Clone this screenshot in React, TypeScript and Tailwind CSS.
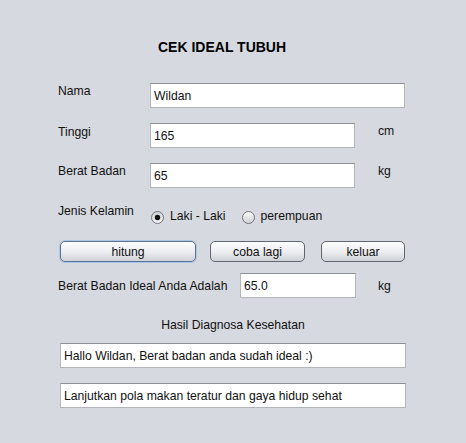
import React from "react";

function Field({ value, w }: { value: string; w: string }) {
  return (
    <div
      className={`h-[25px] ${w} shrink-0 bg-white border border-[#b2b5ba] border-t-[#8d8f93] pl-[3px] pt-[5px] leading-[15px] text-[#111]`}
    >
      {value}
    </div>
  );
}

function Radio({ checked }: { checked: boolean }) {
  return (
    <svg width="13" height="13" viewBox="0 0 13 13" className="shrink-0">
      <defs>
        <linearGradient id={checked ? "rg1" : "rg2"} x1="0" y1="0" x2="0" y2="1">
          <stop offset="0" stopColor={checked ? "#cfd2d6" : "#fbfbfc"} />
          <stop offset="1" stopColor={checked ? "#f3f4f6" : "#cdd0d5"} />
        </linearGradient>
      </defs>
      <circle cx="6.5" cy="6.5" r="6" fill={`url(#${checked ? "rg1" : "rg2"})`} stroke="#6f747c" strokeWidth="1" />
      {checked && <circle cx="6.5" cy="6.5" r="2.7" fill="#111" />}
    </svg>
  );
}

function Button({ label, w, focus }: { label: string; w: string; focus?: boolean }) {
  return (
    <div
      className={`h-[21px] ${w} shrink-0 rounded-[5px] border ${
        focus ? "border-[#5d7594] shadow-[0_0_0_1px_#a9c4e4]" : "border-[#62666e]"
      } bg-gradient-to-b from-[#fdfdfd] via-[#eceef1] to-[#cfd2d8] flex items-center justify-center pt-px leading-[15px] text-[#111]`}
    >
      {label}
    </div>
  );
}

export default function App() {
  return (
    <div
      className="w-[466px] h-[443px] bg-[#d6d9df] text-[12.2px] leading-[15px] text-[#111] overflow-hidden"
      style={{ fontFamily: '"Liberation Sans", Arial, sans-serif' }}
    >
      <div className="pt-[39px] pl-[158px] font-bold text-[14px] leading-[16px] text-black">CEK IDEAL TUBUH</div>

      <div className="pl-[58px]">
        <div className="mt-[28px] flex items-start">
          <div className="w-[92px] mt-[1px]">Nama</div>
          <Field value="Wildan" w="w-[255px]" />
        </div>

        <div className="mt-[15px] flex items-start">
          <div className="w-[92px] mt-[2px]">Tinggi</div>
          <Field value="165" w="w-[205px]" />
          <div className="ml-[23px] mt-[1px]">cm</div>
        </div>

        <div className="mt-[15px] flex items-start">
          <div className="w-[92px] mt-[1px]">Berat Badan</div>
          <Field value="65" w="w-[205px]" />
          <div className="ml-[23px] mt-[1px]">kg</div>
        </div>

        <div className="mt-[16px] flex items-start">
          <div className="w-[92px]">Jenis Kelamin</div>
          <div className="mt-[5px] ml-[1px] flex items-center">
            <div className="flex items-center gap-[6px] pt-px">
              <Radio checked />
              <span className="-mt-px">Laki - Laki</span>
            </div>
            <div className="ml-[16px] flex items-center gap-[6px] pt-px">
              <Radio checked={false} />
              <span className="-mt-px">perempuan</span>
            </div>
          </div>
        </div>

        <div className="mt-[17px] flex items-start">
          <div className="ml-[2px]">
            <Button label="hitung" w="w-[136px]" focus />
          </div>
          <div className="ml-[14px]">
            <Button label="coba lagi" w="w-[95px]" />
          </div>
          <div className="ml-[16px]">
            <Button label="keluar" w="w-[84px]" />
          </div>
        </div>

        <div className="mt-[11px] flex items-start">
          <div className="w-[182px] mt-[6px]">Berat Badan Ideal Anda Adalah</div>
          <Field value="65.0" w="w-[116px]" />
          <div className="ml-[22px] mt-[6px]">kg</div>
        </div>
      </div>

      <div className="mt-[20px] text-center">Hasil Diagnosa Kesehatan</div>

      <div className="pl-[60px]">
        <div className="mt-[10px]">
          <Field value="Hallo Wildan, Berat badan anda sudah ideal :)" w="w-[346px]" />
        </div>
        <div className="mt-[15px]">
          <Field value="Lanjutkan pola makan teratur dan gaya hidup sehat" w="w-[346px]" />
        </div>
      </div>
    </div>
  );
}
